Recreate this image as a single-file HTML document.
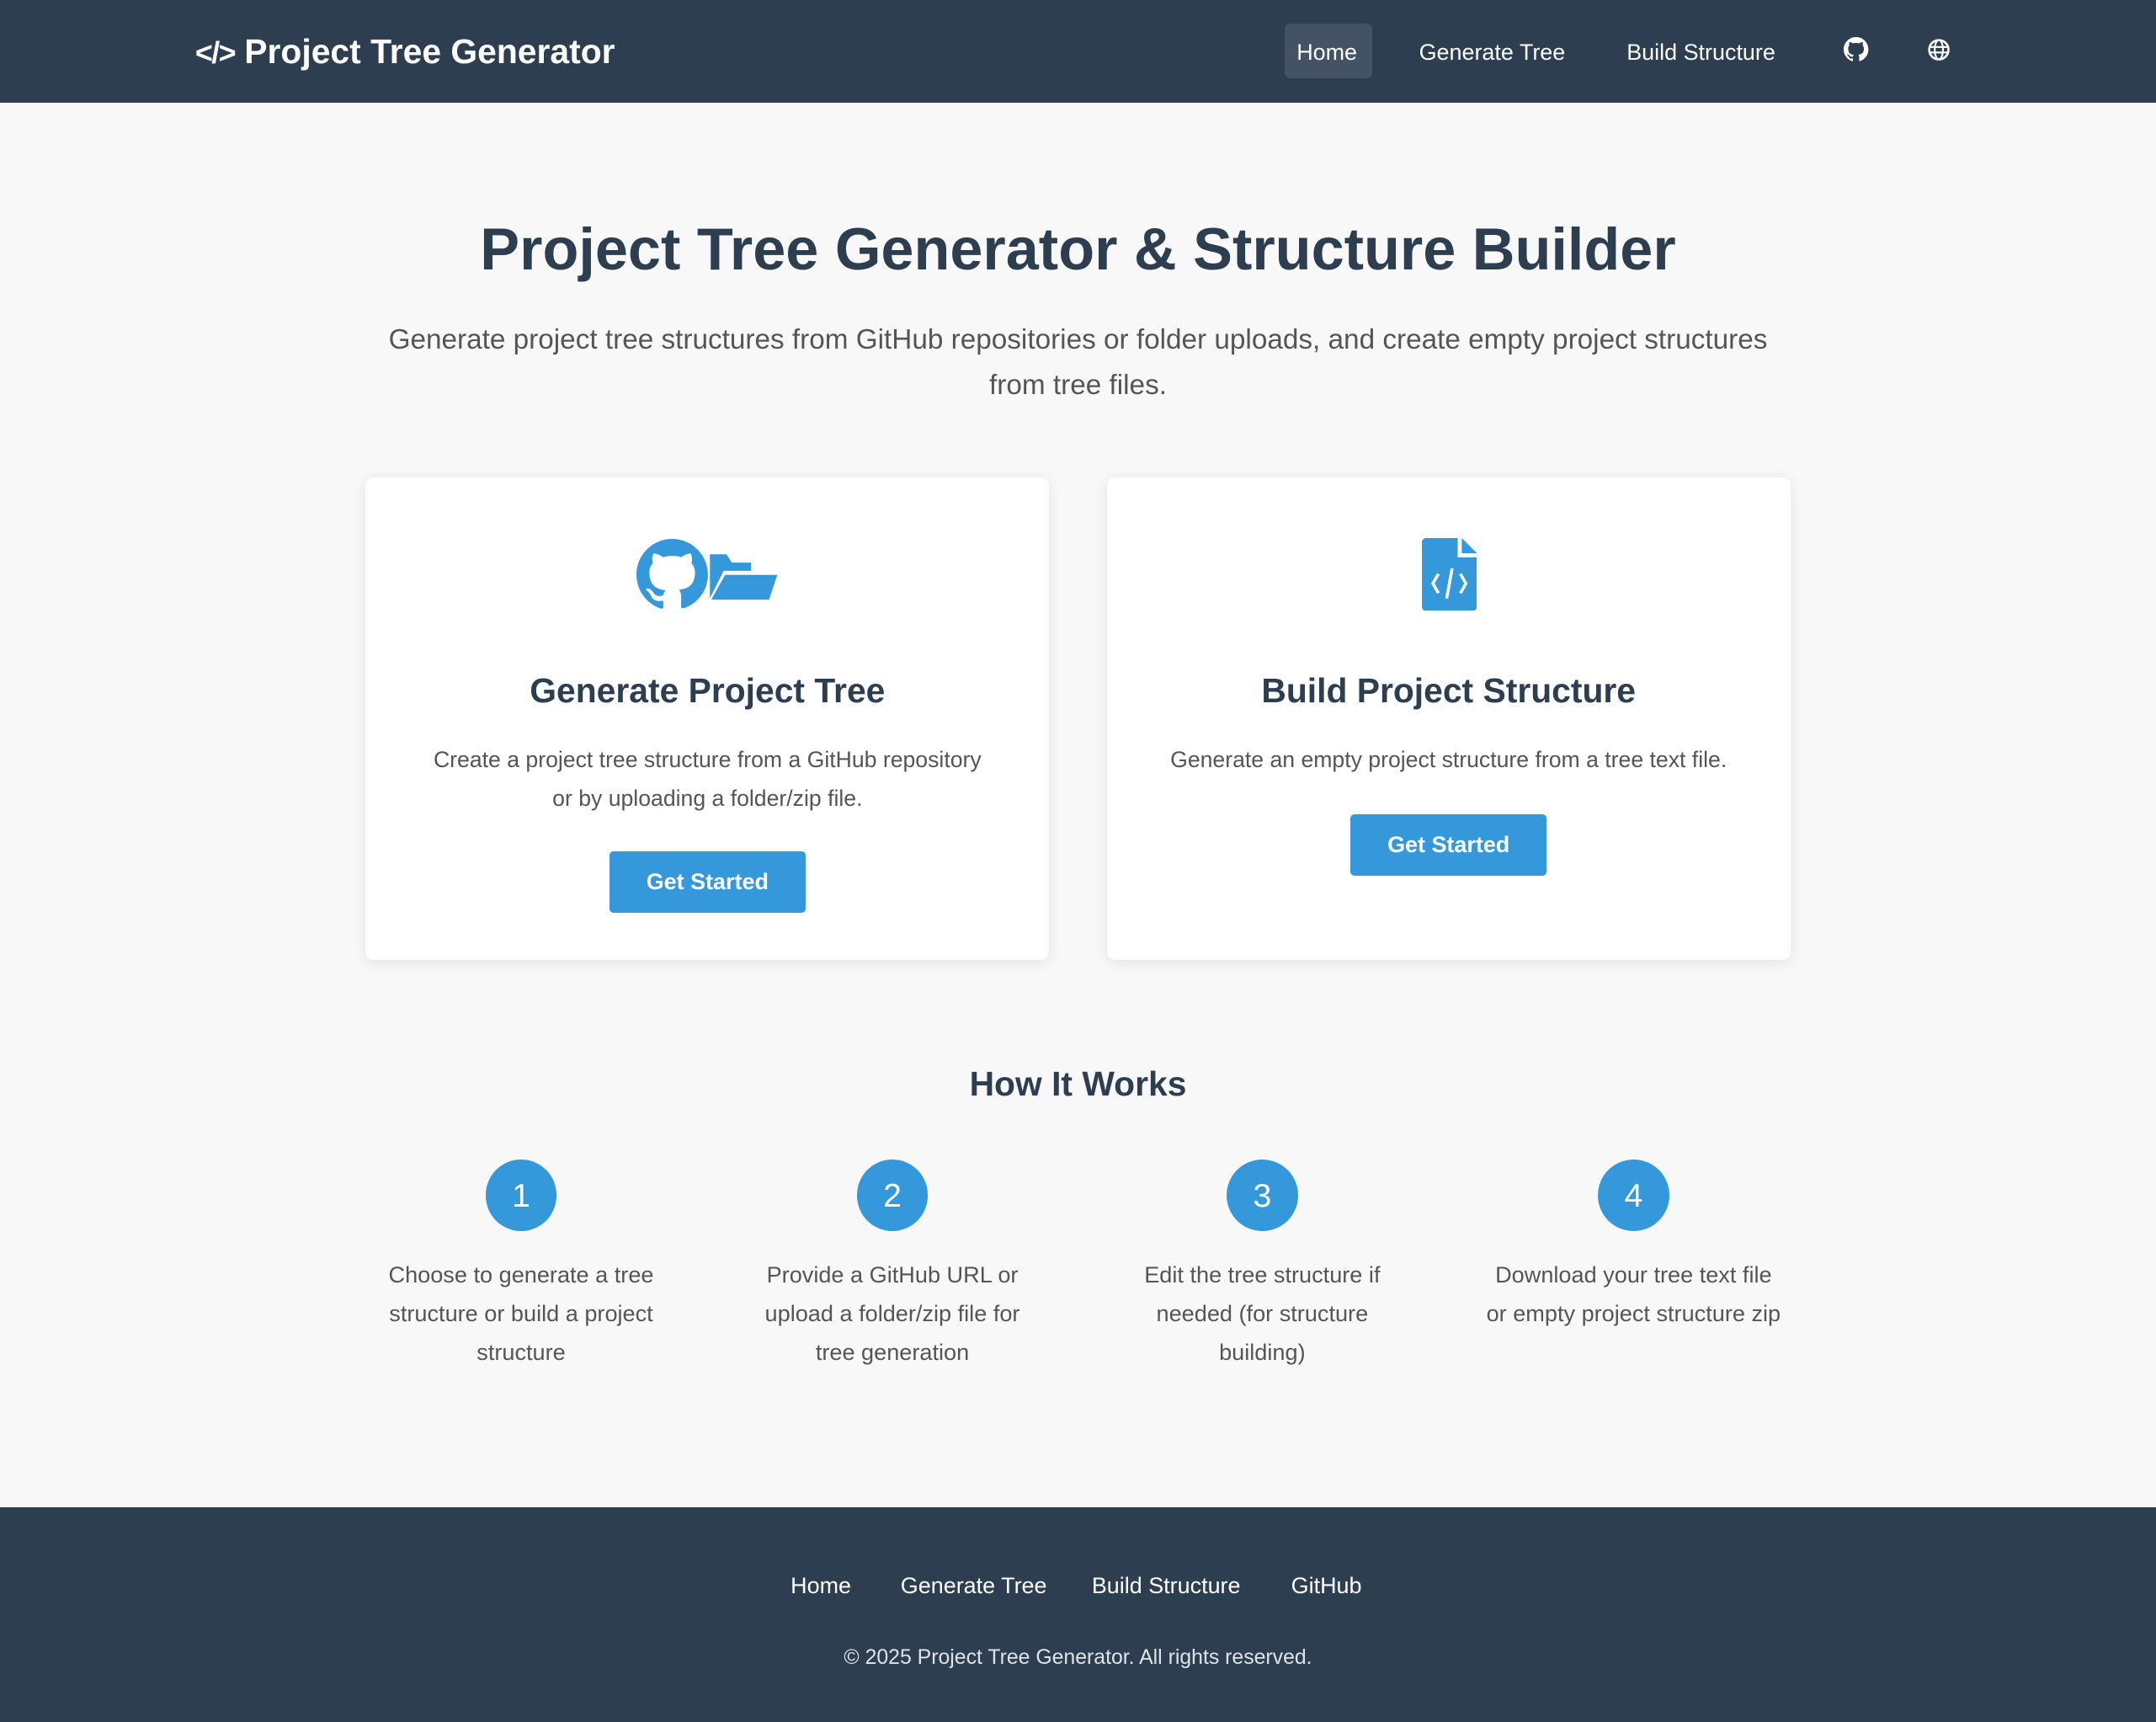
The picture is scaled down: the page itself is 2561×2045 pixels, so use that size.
<!DOCTYPE html>
<html><head><meta charset="utf-8"><style>
html,body{margin:0;padding:0}
body{width:1568px;height:1252px;zoom:1.6333;background:#f8f8f8;font-family:"Liberation Sans",sans-serif;position:relative;overflow:hidden;color:#2c3e50}
.a{position:absolute}
.nav{left:0;top:0;width:1568px;height:75px;background:#2c3e50}
.logo{left:142px;top:23px;color:#fff;font-weight:bold;font-size:25px;white-space:nowrap}
.nl{color:#fff;font-size:16.5px;top:29px;white-space:nowrap}
.home{left:934px;top:17px;width:64px;height:40px;background:#435365;border-radius:4px}
.c{text-align:center}
.card{background:#fff;border-radius:6px;box-shadow:0 2px 10px rgba(0,0,0,.09);top:347px;width:497px;height:351px}
.ct{font-size:25px;font-weight:bold;width:100%}
.cd{font-size:16.3px;color:#555;line-height:28px;width:100%}
.btn{background:#3498db;color:#fff;font-weight:bold;font-size:16.5px;border-radius:3px;width:143px;height:45px;line-height:45px;text-align:center}
.circ{width:52px;height:52px;border-radius:50%;background:#3498db;color:#fff;font-size:24px;line-height:54px;text-align:center;top:843px}
.st{width:270px;top:913px;font-size:16.6px;line-height:28px;color:#555;text-align:center}
.foot{left:0;top:1096px;width:1568px;height:156px;background:#2c3e50}
.fl{color:#fff;font-size:16.5px;top:1144px;white-space:nowrap}
</style></head><body>
<div class="a nav"></div>
<div class="a logo"><span style="font-size:22px;letter-spacing:-1px">&lt;/&gt;</span> Project Tree Generator</div>
<div class="a home"></div>
<div class="a nl" style="left:943px">Home</div>
<div class="a nl" style="left:1032px">Generate Tree</div>
<div class="a nl" style="left:1183px">Build Structure</div>
<svg class="a" style="left:1341px;top:27px" width="18" height="18" viewBox="0 0 16 16"><path fill="#fff" d="M8 0C3.6 0 0 3.6 0 8c0 3.5 2.3 6.5 5.5 7.6.4.1.5-.2.5-.4v-1.4c-2.2.5-2.7-1-2.7-1-.4-.9-.9-1.2-.9-1.2-.7-.5.1-.5.1-.5.8.1 1.2.8 1.2.8.7 1.2 1.9.9 2.3.7.1-.5.3-.9.5-1.1-1.8-.2-3.6-.9-3.6-4 0-.9.3-1.6.8-2.1-.1-.2-.4-1 .1-2.1 0 0 .7-.2 2.200.8.6-.2 1.3-.3 2-.3s1.4.1 2 .3c1.5-1 2.2-.8 2.2-.8.4 1.1.2 1.9.1 2.1.5.6.8 1.3.8 2.1 0 3.1-1.9 3.7-3.6 3.900.3.3.5.8.5 1.5v2.2c0 .2.1.5.6.4C13.7 14.5 16 11.5 16 8c0-4.4-3.6-8-8-8z"/></svg>
<svg class="a" style="left:1402px;top:28px" width="16" height="16" viewBox="0 0 16 16"><circle cx="8" cy="8" r="7" fill="none" stroke="#fff" stroke-width="1.6"/><ellipse cx="8" cy="8" rx="3" ry="7" fill="none" stroke="#fff" stroke-width="1.3"/><path d="M1 6h14M1 10h14" stroke="#fff" stroke-width="1.3"/></svg>

<div class="a c" style="left:0;width:1568px;top:156px;font-size:43px;font-weight:bold">Project Tree Generator &amp; Structure Builder</div>
<div class="a c" style="left:0;width:1568px;top:231px;font-size:20.4px;line-height:33px;color:#555">Generate project tree structures from GitHub repositories or folder uploads, and create empty project structures<br>from tree files.</div>

<div class="a card" style="left:266px">
 <svg class="a" style="left:197px;top:45px" width="52" height="52" viewBox="0 0 16 16"><path fill="#3498db" d="M8 0C3.6 0 0 3.6 0 8c0 3.5 2.3 6.5 5.5 7.6.4.1.5-.2.5-.4v-1.4c-2.2.5-2.7-1-2.7-1-.4-.9-.9-1.2-.9-1.2-.7-.5.1-.5.1-.5.8.1 1.2.8 1.2.8.7 1.2 1.9.9 2.3.7.1-.5.3-.9.5-1.1-1.8-.2-3.6-.9-3.6-4 0-.9.3-1.6.8-2.1-.1-.2-.4-1 .1-2.1 0 0 .7-.2 2.2.8.6-.2 1.3-.3 2-.3s1.4.1 2 .3c1.5-1 2.2-.8 2.2-.8.4 1.1.2 1.9.1 2.1.5.6.8 1.3.8 2.1 0 3.1-1.9 3.7-3.6 3.9.3.3.5.8.5 1.5v2.2c0 .2.1.5.6.4C13.7 14.5 16 11.5 16 8c0-4.4-3.6-8-8-8z"/></svg>
 <svg class="a" style="left:248px;top:54px" width="52" height="36" viewBox="0 0 52 36"><path fill="#3498db" d="M2 2h12l4 6h14v6H12L2 34z"/><path fill="#3498db" d="M13 17h38l-6 18H3z"/></svg>
 <div class="a c ct" style="top:141px">Generate Project Tree</div>
 <div class="a c cd" style="top:192px">Create a project tree structure from a GitHub repository<br>or by uploading a folder/zip file.</div>
 <div class="a btn" style="left:177px;top:272px">Get Started</div>
</div>
<div class="a card" style="left:805px">
 <svg class="a" style="left:229px;top:44px" width="40" height="53" viewBox="0 0 40 53"><path fill="#3498db" d="M3 0h23v14h14v36a3 3 0 0 1-3 3H3a3 3 0 0 1-3-3V3a3 3 0 0 1 3-3z"/><path fill="#3498db" d="M29 0l11 11H29z"/><path d="M12 26l-4 7 4 7M28 26l4 7-4 7M22 22l-4 22" stroke="#fff" stroke-width="2.2" fill="none"/></svg>
 <div class="a c ct" style="top:141px">Build Project Structure</div>
 <div class="a c cd" style="top:192px">Generate an empty project structure from a tree text file.</div>
 <div class="a btn" style="left:177px;top:245px">Get Started</div>
</div>

<div class="a c" style="left:0;width:1568px;top:774px;font-size:25px;font-weight:bold">How It Works</div>
<div class="a circ" style="left:353px">1</div>
<div class="a circ" style="left:623px">2</div>
<div class="a circ" style="left:892px">3</div>
<div class="a circ" style="left:1162px">4</div>
<div class="a st" style="left:244px">Choose to generate a tree<br>structure or build a project<br>structure</div>
<div class="a st" style="left:514px">Provide a GitHub URL or<br>upload a folder/zip file for<br>tree generation</div>
<div class="a st" style="left:783px">Edit the tree structure if<br>needed (for structure<br>building)</div>
<div class="a st" style="left:1053px">Download your tree text file<br>or empty project structure zip</div>

<div class="a foot"></div>
<div class="a fl" style="left:575px">Home</div>
<div class="a fl" style="left:655px">Generate Tree</div>
<div class="a fl" style="left:794px">Build Structure</div>
<div class="a fl" style="left:939px">GitHub</div>
<div class="a c" style="left:0;width:1568px;top:1197px;font-size:15.2px;color:#dde3e8">© 2025 Project Tree Generator. All rights reserved.</div>
</body></html>
